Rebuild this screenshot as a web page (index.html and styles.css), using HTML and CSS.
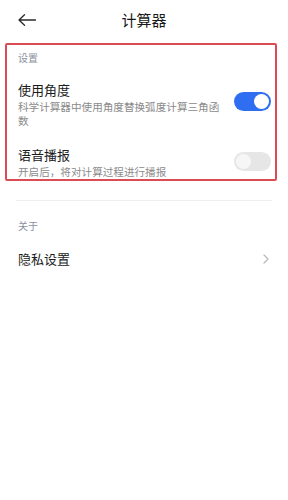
FILE: index.html
```html
<!DOCTYPE html>
<html lang="zh-CN">
<head>
<meta charset="utf-8">
<title>计算器</title>
<link rel="stylesheet" href="styles.css">
</head>
<body>
<div class="page">
  <header class="header">
    <span class="back">
      <svg width="18" height="12" viewBox="0 0 18 12"><path d="M1 6 H17.5 M6.5 0.8 L1 6 L6.5 11.2" fill="none" stroke="#2a2a2a" stroke-width="1.3" stroke-linecap="round" stroke-linejoin="round"/></svg>
    </span>
    <h1 class="title">计算器</h1>
    <span></span>
  </header>

  <section class="box">
    <div class="group-label">设置</div>
    <div class="row">
      <div class="text">
        <div class="row-title">使用角度</div>
        <div class="row-desc">科学计算器中使用角度替换弧度计算三角函数</div>
      </div>
      <span class="switch on lift"><span class="knob"></span></span>
    </div>
    <div class="row row-second">
      <div class="text">
        <div class="row-title">语音播报</div>
        <div class="row-desc">开启后，将对计算过程进行播报</div>
      </div>
      <span class="switch lift-small"><span class="knob"></span></span>
    </div>
  </section>

  <div class="divider"></div>

  <div class="group-label about">关于</div>
  <div class="link-row">
    <span class="row-title">隐私设置</span>
    <svg class="chev" width="6" height="10" viewBox="0 0 6 10"><path d="M1 1 L5 5 L1 9" fill="none" stroke="#b8b8b8" stroke-width="1.2" stroke-linecap="round" stroke-linejoin="round"/></svg>
  </div>
</div>
</body>
</html>
```

FILE: styles.css
```css
* { box-sizing: border-box; }
html, body {
  margin: 0;
  padding: 0;
  background: #ffffff;
}
body {
  font-family: "Noto Sans CJK SC", "Noto Sans", sans-serif;
  color: #1c1c1c;
}
.page {
  width: 288px;
  min-height: 500px;
}
.header {
  height: 40px;
  display: grid;
  grid-template-columns: 1fr auto 1fr;
  align-items: center;
}
.back {
  display: flex;
  align-items: center;
  padding-left: 18px;
  height: 12px;
}
.title {
  margin: 0;
  font-size: 15px;
  font-weight: 400;
  line-height: 22px;
  color: #1a1a1a;
}
.box {
  margin: 3px 11px 0 5px;
  border: 2px solid #dc4c55;
  border-radius: 2px;
  padding: 0 4px 0 11px;
}
.group-label {
  font-size: 10px;
  line-height: 14px;
  color: #8b8fa0;
  padding-top: 6px;
}
.row {
  display: flex;
  align-items: center;
  gap: 10px;
  margin-top: 16px;
}
.row-second {
  margin-top: 18px;
}
.text {
  flex: 1;
  min-width: 0;
}
.row-title {
  font-size: 13px;
  line-height: 18px;
  color: #1c1c1c;
}
.row-desc {
  font-size: 10.6px;
  line-height: 14px;
  margin-top: 1px;
  color: #8a8a8a;
}
.switch {
  flex: none;
  width: 37px;
  height: 19px;
  border-radius: 10px;
  background: #e6e6e6;
  display: flex;
  align-items: center;
  padding: 0 2px;
}
.switch .knob {
  width: 15px;
  height: 15px;
  border-radius: 50%;
  background: #f6f6f6;
}
.switch.on {
  background: #2f6ef0;
  justify-content: flex-end;
}
.switch.on .knob {
  background: #ffffff;
}
.lift {
  margin-bottom: 7px;
}
.lift-small {
  margin-bottom: 3px;
}
.divider {
  height: 1px;
  background: #efefef;
  margin: 19px 16px 0 16px;
}
.about {
  padding: 0 0 0 18px;
  margin-top: 18px;
}
.link-row {
  display: flex;
  align-items: center;
  justify-content: space-between;
  padding: 0 19px 0 18px;
  margin-top: 17px;
  height: 18px;
}
.link-row .row-title {
  line-height: 18px;
}
.chev {
  display: block;
}
```
